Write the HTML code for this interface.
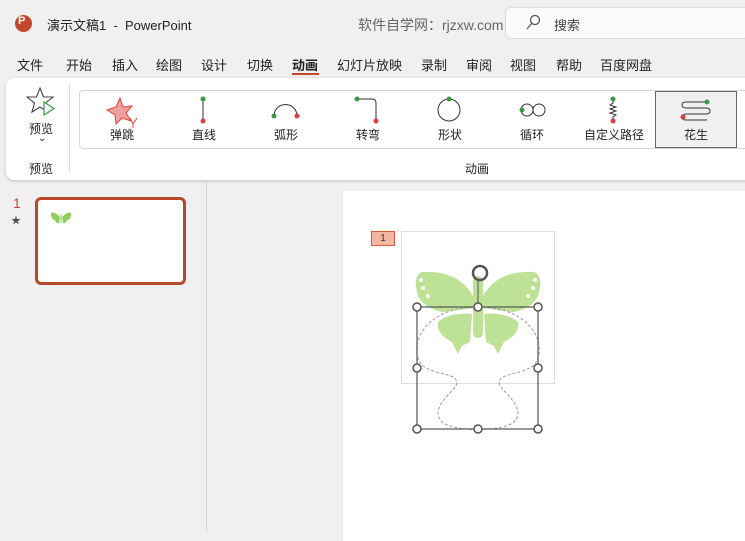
<!DOCTYPE html>
<html><head><meta charset="utf-8"><style>
*{margin:0;padding:0;box-sizing:border-box}
body{width:745px;height:532px;overflow:hidden;background:#f0f0f0;font-family:"Liberation Sans","Noto Sans CJK SC",sans-serif;color:#222;position:relative}
.a{position:absolute}
.t{font-size:13px;white-space:nowrap}
.lbl{position:absolute;top:126px;font-size:12px;transform:translateX(-50%);white-space:nowrap}
</style></head><body>
<div class="a" style="left:15px;top:15px;width:17px;height:17px;border-radius:50%;background:#c4462b"></div>
<div class="a" style="left:18px;top:15px;font-size:11px;color:#fff;font-weight:bold">P</div>
<div class="a t" style="left:47px;top:15px">演示文稿1 &nbsp;- &nbsp;PowerPoint</div>
<div class="a t" style="left:358px;top:15px;color:#666;font-size:14px">软件自学网：rjzxw.com</div>
<div class="a" style="left:505px;top:7px;width:245px;height:32px;background:#fbfbfb;border:1px solid #ddd;border-radius:6px"></div>
<svg class="a" style="left:524px;top:13px" width="18" height="18"><circle cx="11" cy="7" r="4.5" fill="none" stroke="#555" stroke-width="1.3"/><path d="M8 10 L3 16" stroke="#555" stroke-width="1.3"/></svg>
<div class="a t" style="left:554px;top:15px;color:#444">搜索</div>
<div class="a t" style="left:17px;top:55px">文件</div>
<div class="a t" style="left:66px;top:55px">开始</div>
<div class="a t" style="left:112px;top:55px">插入</div>
<div class="a t" style="left:156px;top:55px">绘图</div>
<div class="a t" style="left:201px;top:55px">设计</div>
<div class="a t" style="left:247px;top:55px">切换</div>
<div class="a t" style="left:292px;top:55px;font-weight:bold">动画</div>
<div class="a" style="left:292px;top:73px;width:27px;height:2px;background:#c4462b"></div>
<div class="a t" style="left:337px;top:55px">幻灯片放映</div>
<div class="a t" style="left:421px;top:55px">录制</div>
<div class="a t" style="left:466px;top:55px">审阅</div>
<div class="a t" style="left:510px;top:55px">视图</div>
<div class="a t" style="left:556px;top:55px">帮助</div>
<div class="a t" style="left:600px;top:55px">百度网盘</div>
<div class="a" style="left:6px;top:78px;width:760px;height:102px;background:#fff;border-radius:8px;box-shadow:0 1px 3px rgba(0,0,0,.2)"></div>
<svg class="a" style="left:26px;top:86px" width="34" height="34"><path d="M14 2 L17.5 11 L27 11 L19.5 17 L22 26 L14 21 L6 26 L8.5 17 L1 11 L10.5 11Z" fill="none" stroke="#444" stroke-width="1.1"/><path d="M18 16 L18 29 L28 22.5Z" fill="#fff" stroke="#3a9a45" stroke-width="1.2"/></svg>
<div class="a" style="left:29px;top:120px;font-size:12px">预览</div>
<div class="a" style="left:38px;top:133px;font-size:10px">⌄</div>
<div class="a" style="left:29px;top:160px;font-size:12px">预览</div>
<div class="a" style="left:69px;top:83px;width:1px;height:90px;background:#ddd"></div>
<div class="a" style="left:79px;top:90px;width:680px;height:59px;border:1px solid #d6d6d6;border-radius:4px"></div>
<div class="a" style="left:655px;top:91px;width:82px;height:57px;border:1px solid #666;background:#f0f0f0"></div>
<svg class="a" style="left:0;top:90px" width="745" height="40">
<path d="M120 8 L123 17 L132 16 L126 23 L131 31 L122 28 L116 34 L115 25 L107 20 L116 17Z" fill="#f4a0a0" stroke="#e04040"/>
<path d="M130 28 L133 34 L137 28 M133 34 L133 38" stroke="#e04040" fill="none"/>
<line x1="203" y1="9" x2="203" y2="31" stroke="#333"/><circle cx="203" cy="9" r="2.5" fill="#3a9a45"/><circle cx="203" cy="31" r="2.5" fill="#e03c3c"/>
<path d="M274 26 A11 11 0 0 1 297 26" stroke="#333" fill="none"/><circle cx="274" cy="26" r="2.5" fill="#3a9a45"/><circle cx="297" cy="26" r="2.5" fill="#e03c3c"/>
<path d="M357 9 L372 9 Q376 9 376 13 L376 31" stroke="#333" fill="none"/><circle cx="357" cy="9" r="2.5" fill="#3a9a45"/><circle cx="376" cy="31" r="2.5" fill="#e03c3c"/>
<circle cx="449" cy="20" r="11" fill="none" stroke="#333"/><circle cx="449" cy="9" r="2.5" fill="#3a9a45"/>
<circle cx="527" cy="20" r="6" fill="none" stroke="#333"/><circle cx="539" cy="20" r="6" fill="none" stroke="#333"/><circle cx="522" cy="20" r="2.5" fill="#3a9a45"/>
<path d="M613 9 L613 13 L610 15 L616 17 L610 19 L616 21 L610 23 L616 25 L613 27 L613 31" stroke="#333" fill="none"/><circle cx="613" cy="9" r="2.5" fill="#3a9a45"/><circle cx="613" cy="31" r="2.5" fill="#e03c3c"/>
<path d="M707 12 L686 12 Q682 12 682 15 Q682 18 686 18 L706 18 Q710 18 710 21 Q710 24 706 24 L686 24 Q682 24 682 27 Q682 30 686 30 L707 30" stroke="#333" fill="none"/><circle cx="707" cy="12" r="2.5" fill="#3a9a45"/><circle cx="683" cy="27" r="2.5" fill="#e03c3c"/>
</svg>
<div class="lbl" style="left:122px">弹跳</div>
<div class="lbl" style="left:204px">直线</div>
<div class="lbl" style="left:286px">弧形</div>
<div class="lbl" style="left:368px">转弯</div>
<div class="lbl" style="left:450px">形状</div>
<div class="lbl" style="left:532px">循环</div>
<div class="lbl" style="left:614px">自定义路径</div>
<div class="lbl" style="left:696px">花生</div>
<div class="a" style="left:465px;top:160px;font-size:12px">动画</div>
<div class="a" style="left:206px;top:182px;width:1px;height:350px;background:#d6d6d6"></div>
<div class="a" style="left:13px;top:195px;font-size:14px;color:#c4462b">1</div>
<div class="a" style="left:11px;top:212px;font-size:10px;color:#555">★</div>
<div class="a" style="left:35px;top:197px;width:151px;height:88px;background:#fff;border:3px solid #b9472a;border-radius:6px"></div>
<svg class="a" style="left:50px;top:211px" width="22" height="14"><path d="M10 6 Q4 0 1 2 Q1 9 5 9 Q6 13 9 12Z M12 6 Q18 0 21 2 Q21 9 17 9 Q16 13 13 12Z" fill="#8fcf5a"/><rect x="10.5" y="3" width="1" height="9" fill="#8fcf5a"/></svg>
<div class="a" style="left:343px;top:191px;width:410px;height:350px;background:#fff"></div>
<div class="a" style="left:371px;top:231px;width:24px;height:15px;background:#f4b6a0;border:1px solid #d25a3c;font-size:10px;text-align:center;line-height:13px;color:#333">1</div>
<div class="a" style="left:401px;top:231px;width:154px;height:153px;border:1px solid #ddd"></div>
<svg class="a" style="left:400px;top:250px" width="160" height="190">
<g fill="#bde195">
<path d="M74 48 Q60 20 22 22 Q12 26 18 46 Q24 58 42 62 Q60 60 74 58Z"/>
<path d="M82 48 Q96 20 134 22 Q144 26 138 46 Q132 58 114 62 Q96 60 82 58Z"/>
<path d="M72 64 Q50 62 38 72 Q36 84 52 92 L58 104 L62 96 L70 92Z"/>
<path d="M84 64 Q106 62 118 72 Q120 84 104 92 L98 104 L94 96 L86 92Z"/>
<rect x="73" y="26" width="10" height="62" rx="5"/>
</g>
<g fill="#fff"><circle cx="21" cy="30" r="2"/><circle cx="23" cy="38" r="2"/><circle cx="28" cy="46" r="2"/><circle cx="135" cy="30" r="2"/><circle cx="133" cy="38" r="2"/><circle cx="128" cy="46" r="2"/></g>
<path d="M78 57 C20 57 8 100 22 115 C34 126 62 122 56 136 C48 146 30 160 42 172 C54 182 102 182 114 172 C126 160 108 146 100 136 C94 122 122 126 134 115 C148 100 136 57 78 57Z" fill="none" stroke="#999" stroke-dasharray="3 2"/>
<rect x="17" y="57" width="121" height="122" fill="none" stroke="#555" stroke-width="1.2"/>
<line x1="78" y1="30" x2="78" y2="57" stroke="#555"/>
<circle cx="80" cy="23" r="7" fill="none" stroke="#555" stroke-width="2.5"/>
<g fill="#fff" stroke="#555" stroke-width="1.5"><circle cx="17" cy="57" r="4"/><circle cx="78" cy="57" r="4"/><circle cx="138" cy="57" r="4"/><circle cx="17" cy="118" r="4"/><circle cx="138" cy="118" r="4"/><circle cx="17" cy="179" r="4"/><circle cx="78" cy="179" r="4"/><circle cx="138" cy="179" r="4"/></g>
</svg>
</body></html>
